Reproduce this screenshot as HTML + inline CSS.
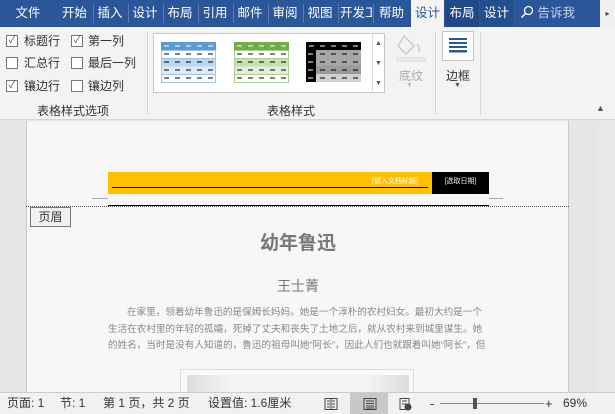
<!DOCTYPE html>
<html><head><meta charset="utf-8"><style>
*{margin:0;padding:0;box-sizing:border-box}
body{width:615px;height:414px;overflow:hidden;position:relative;background:#e6e6e6;font-family:"Liberation Sans","Noto Sans CJK SC",sans-serif;}
.a{position:absolute;white-space:nowrap}
.tabs{left:0;top:0;width:600px;height:27px;background:#2b579a}
.t{position:absolute;top:0;height:27px;line-height:27px;color:#fff;font-size:12.5px;text-align:center}
.sep{position:absolute;top:4px;width:1px;height:19px;background:#5a7cb4}
.rib{left:0;top:27px;width:615px;height:93px;background:#f3f3f1;border-bottom:1px solid #d5d5d5}
.cb{position:absolute;width:12px;height:12px;border:1px solid #777;background:#fff;font-size:10px;line-height:10px;text-align:center;color:#555}
.lbl{position:absolute;font-size:12px;color:#333}
.vs{position:absolute;width:1px;background:#d8d8d8}
.dash{position:absolute;height:1px;background:#000}
.pl{position:absolute;font-size:9.6px;color:#888;white-space:nowrap}
</style></head><body>
<div class="a tabs">
<div class="t" style="left:10px;width:36px">文件</div>
<div class="t" style="left:58px;width:33px">开始</div><div class="sep" style="left:93px"></div>
<div class="t" style="left:95px;width:30px">插入</div><div class="sep" style="left:128px"></div>
<div class="t" style="left:130px;width:30px">设计</div><div class="sep" style="left:163px"></div>
<div class="t" style="left:165px;width:30px">布局</div><div class="sep" style="left:198px"></div>
<div class="t" style="left:200px;width:30px">引用</div><div class="sep" style="left:233px"></div>
<div class="t" style="left:235px;width:30px">邮件</div><div class="sep" style="left:268px"></div>
<div class="t" style="left:270px;width:30px">审阅</div><div class="sep" style="left:303px"></div>
<div class="t" style="left:305px;width:30px">视图</div><div class="sep" style="left:338px"></div>
<div class="t" style="left:340px;width:32px;overflow:hidden">开发工</div><div class="sep" style="left:373px"></div>
<div class="t" style="left:375px;width:33px">帮助</div>
<div class="t" style="left:411px;width:33px;background:#f3f3f1;color:#2b579a">设计</div>
<div class="t" style="left:445px;width:34px;background:#1f4a87">布局</div>
<div class="t" style="left:480px;width:33px;background:#244f8f">设计</div>
<div class="t" style="left:520px;width:70px;color:#c8d4e8;text-align:left">
<svg width="14" height="14" style="vertical-align:-2px" viewBox="0 0 14 14"><circle cx="8.5" cy="5.5" r="4" fill="none" stroke="#fff" stroke-width="1.3"/><path d="M5.5 8.5L1.5 12.5" stroke="#fff" stroke-width="1.5"/></svg> 告诉我</div>
</div>
<div class="a" style="left:600px;top:0;width:15px;height:27px;background:#f0f0f0;font-size:8px;line-height:27px;color:#444;text-align:center">▸</div>
<div class="a rib">
<div class="cb" style="left:6px;top:8px">✓</div><div class="lbl" style="left:24px;top:5px">标题行</div>
<div class="cb" style="left:71px;top:8px">✓</div><div class="lbl" style="left:88px;top:5px">第一列</div>
<div class="cb" style="left:6px;top:30px"></div><div class="lbl" style="left:24px;top:27px">汇总行</div>
<div class="cb" style="left:71px;top:30px"></div><div class="lbl" style="left:88px;top:27px">最后一列</div>
<div class="cb" style="left:6px;top:53px">✓</div><div class="lbl" style="left:24px;top:50px">镶边行</div>
<div class="cb" style="left:71px;top:53px"></div><div class="lbl" style="left:88px;top:50px">镶边列</div>
<div class="lbl" style="left:37px;top:75px">表格样式选项</div>
<div class="vs" style="left:147px;top:5px;height:83px"></div>
<div style="position:absolute;left:153px;top:6px;width:232px;height:60px;border:1px solid #c6c6c6;background:#fff"></div>
<svg style="position:absolute;left:160px;top:15px" width="202" height="42">
<rect x="1" y="0" width="55" height="8" fill="#5b9bd5"/>
<g fill="#ddebf7" stroke="#9dc3e6" stroke-width="1"><rect x="1.5" y="8.5" width="54" height="32"/></g>
<rect x="1.5" y="16.5" width="54" height="8" fill="#bdd7ee"/><rect x="1.5" y="32.5" width="54" height="8" fill="#fff" stroke="#9dc3e6"/><rect x="1.5" y="8.5" width="54" height="8" fill="#fff" stroke="#9dc3e6"/>
<rect x="74" y="0" width="55" height="8" fill="#70ad47"/>
<rect x="74.5" y="8.5" width="54" height="32" fill="#e2efd9" stroke="#a9d08e"/>
<rect x="74.5" y="16.5" width="54" height="8" fill="#c5e0b3"/><rect x="74.5" y="32.5" width="54" height="8" fill="#fff" stroke="#a9d08e"/><rect x="74.5" y="8.5" width="54" height="8" fill="#fff" stroke="#a9d08e"/>
<rect x="146" y="0" width="55" height="8" fill="#000"/>
<rect x="146" y="8" width="55" height="32" fill="#a6a6a6"/><rect x="146" y="24" width="55" height="8" fill="#999"/><rect x="146" y="32" width="55" height="8" fill="#d0d0d0"/>
<rect x="146" y="8" width="10" height="32" fill="#000"/>
<g stroke="#000" stroke-width="1"><path d="M4 4h5M15 4h5M26 4h5M37 4h5M48 4h5" stroke="#fff"/><path d="M77 4h5M88 4h5M99 4h5M110 4h5M121 4h5" stroke="#fff"/><path d="M149 4h5M160 4h5M171 4h5M182 4h5M193 4h5" stroke="#fff"/>
<path d="M4 12h5M15 12h5M26 12h5M37 12h5M48 12h5M4 20h5M15 20h5M26 20h5M37 20h5M48 20h5M4 28h5M15 28h5M26 28h5M37 28h5M48 28h5M4 36h5M15 36h5M26 36h5M37 36h5M48 36h5"/>
<path d="M77 12h5M88 12h5M99 12h5M110 12h5M121 12h5M77 20h5M88 20h5M99 20h5M110 20h5M121 20h5M77 28h5M88 28h5M99 28h5M110 28h5M121 28h5M77 36h5M88 36h5M99 36h5M110 36h5M121 36h5"/>
<path d="M160 12h5M171 12h5M182 12h5M193 12h5M160 20h5M171 20h5M182 20h5M193 20h5M160 28h5M171 28h5M182 28h5M193 28h5M160 36h5M171 36h5M182 36h5M193 36h5"/><path d="M148 12h5M148 20h5M148 28h5M148 36h5" stroke="#fff"/></g>
</svg>
<div style="position:absolute;left:372px;top:6px;width:13px;height:60px;border:1px solid #c6c6c6;border-left:1px solid #ddd;background:#fff;font-size:7px;color:#555;text-align:center;line-height:20px">▲<br>▼<br>▼</div>
<svg style="position:absolute;left:394px;top:5px" width="34" height="30"><path d="M10 4l10 10-8 8-8-8z" fill="none" stroke="#ccc" stroke-width="1.5"/><path d="M23 12c3 4 3 7 1 8" stroke="#ccc" fill="none" stroke-width="1.5"/><rect x="2" y="25" width="30" height="5" fill="#e6e6e6"/></svg>
<div class="lbl" style="left:399px;top:40px;color:#aaa">底纹</div>
<div class="lbl" style="left:406px;top:55px;color:#bbb;font-size:7px">▼</div>
<div class="vs" style="left:435px;top:5px;height:83px"></div>
<div style="position:absolute;left:442px;top:4px;width:32px;height:30px;border:1px solid #c6c6c6;background:#fff"></div>
<svg style="position:absolute;left:449px;top:11px" width="20" height="16"><g fill="#2b579a"><rect y="0" width="18" height="2"/><rect y="4" width="18" height="2"/><rect y="8" width="18" height="2"/><rect y="12" width="18" height="2.5"/></g></svg>
<div class="lbl" style="left:446px;top:40px">边框</div>
<div class="lbl" style="left:454px;top:55px;color:#555;font-size:7px">▼</div>
<div class="vs" style="left:480px;top:5px;height:83px"></div>
<div class="lbl" style="left:267px;top:75px">表格样式</div>
<div class="lbl" style="left:596px;top:76px;font-size:9px;color:#555">▲</div>
</div>
<div class="a" style="left:26px;top:121px;width:543px;height:272px;background:#f7f7f7;border-left:1px solid #c8c8c8;border-right:1px solid #c8c8c8"></div>
<div class="a" style="left:597px;top:121px;width:18px;height:272px;background:#e8e8e8"></div>
<div class="a" style="left:108px;top:172px;width:324px;height:22px;background:#ffc000"></div>
<div class="a" style="left:432px;top:172px;width:57px;height:22px;background:#000;color:#eee;font-size:7px;line-height:20px;text-align:center">[选取日期]</div>
<div class="a" style="left:372px;top:176px;font-size:7px;color:#fff">[键入文档标题]</div>
<div class="dash" style="left:112px;top:187px;width:316px"></div>
<div class="dash" style="left:108px;top:205px;width:381px"></div>
<div class="a" style="left:92px;top:198px;width:16px;height:1px;background:#aaa"></div>
<div class="a" style="left:489px;top:198px;width:14px;height:1px;background:#aaa"></div>
<div class="a" style="left:26px;top:206px;width:543px;border-top:1px dotted #555"></div>
<div class="a" style="left:30px;top:207px;width:41px;height:20px;border:1px solid #777;background:#f0f0f0;font-size:12px;line-height:18px;text-align:center;color:#333">页眉</div>
<div class="a" style="left:0;width:596px;top:228px;text-align:center;font-size:19px;font-weight:bold;color:#777">幼年鲁迅</div>
<div class="a" style="left:0;width:596px;top:276px;text-align:center;font-size:14px;color:#777">王士菁</div>
<div class="pl" style="left:127px;top:304px">在家里，领着幼年鲁迅的是保姆长妈妈。她是一个淳朴的农村妇女。最初大约是一个</div>
<div class="pl" style="left:108px;top:321px">生活在农村里的年轻的孤孀，死掉了丈夫和丧失了土地之后，就从农村来到城里谋生。她</div>
<div class="pl" style="left:108px;top:337px">的姓名，当时是没有人知道的，鲁迅的祖母叫她“阿长”，因此人们也就跟着叫她“阿长”，但</div>
<div class="a" style="left:180px;top:369px;width:234px;height:24px;border:1px solid #ddd;background:#fafafa"></div>
<div class="a" style="left:187px;top:375px;width:222px;height:18px;background:linear-gradient(90deg,#ddd,#f4f4f4 20%,#f4f4f4 80%,#ddd)"></div>
<div class="a" style="left:0;top:392px;width:615px;height:22px;background:#f1f1f1;border-top:1px solid #ccc;font-size:12px;color:#333;line-height:21px">
<span class="a" style="left:7px">页面: 1</span><span class="a" style="left:60px">节: 1</span><span class="a" style="left:103px">第 1 页，共 2 页</span><span class="a" style="left:208px">设置值: 1.6厘米</span>
<span class="a" style="left:350px;top:0;width:38px;height:21px;background:#c8c8c8"></span>
<svg class="a" style="left:322px;top:4px" width="90" height="14"><g fill="none" stroke="#444"><rect x="3" y="1.5" width="12" height="11"/><path d="M9 1v12M5 4h3M5 7h3M5 10h3M10 4h3M10 7h3M10 10h3"/><rect x="42" y="1.5" width="12" height="11"/><path d="M44 4h8M44 6.5h8M44 9h8M44 11h8"/><rect x="78" y="1.5" width="9" height="11"/><path d="M80 4h5M80 7h5"/><circle cx="86" cy="10" r="3" fill="#444"/></g></svg>
<span class="a" style="left:430px;top:0;font-size:13px">-</span>
<span class="a" style="left:440px;top:10px;width:104px;height:1px;background:#888"></span>
<span class="a" style="left:473px;top:5px;width:4px;height:11px;background:#555"></span>
<span class="a" style="left:545px;top:0;font-size:13px">+</span>
<span class="a" style="left:563px">69%</span>
</div>
</body></html>
